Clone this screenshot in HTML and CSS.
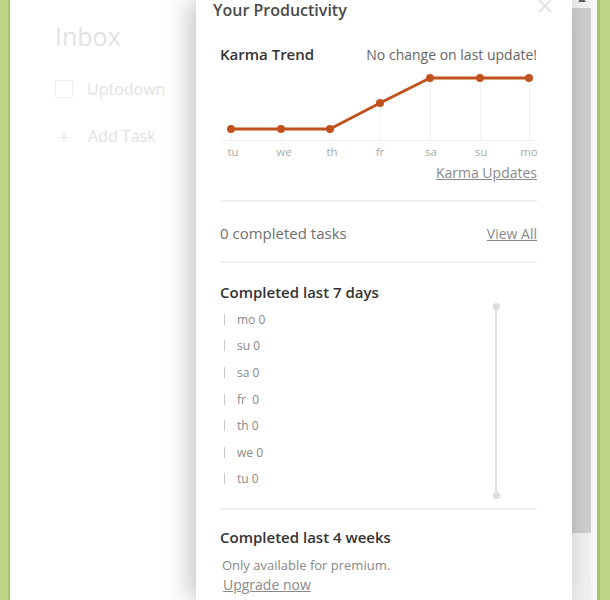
FILE: index.html
```html
<!DOCTYPE html>
<html lang="en">
<head>
    <meta charset="UTF-8">
    <meta name="viewport" content="width=device-width, initial-scale=1.0">
    <title>Your Productivity</title>
    <link rel="stylesheet" href="styles.css">
</head>
<body>
    <div class="app">
        <div class="edge edge-left"></div>

        <!-- Faded inbox behind the popup -->
        <div class="inbox">
            <h1 class="inbox-title">Inbox</h1>
            <div class="task">
                <span class="checkbox"></span>
                <span>Uptodown</span>
            </div>
            <div class="task add-task">
                <span class="plus">+</span>
                <span>Add Task</span>
            </div>
        </div>

        <!-- Productivity popup -->
        <div class="panel">
            <svg class="close" width="16" height="16" viewBox="0 0 16 16">
                <path d="M2 1 L14 13 M14 1 L2 13" stroke="#dcdcdc" stroke-width="1.6" fill="none"/>
            </svg>
            <h2 class="panel-title">Your Productivity</h2>

            <div class="row karma-head">
                <h3 class="section-title">Karma Trend</h3>
                <span class="note">No change on last update!</span>
            </div>

            <svg class="chart" width="317" height="92" viewBox="0 0 317 92">
                <g stroke="#f1f1f1" stroke-width="1">
                    <line x1="0" y1="70.5" x2="317" y2="70.5"/>
                    <line x1="11.5" y1="59" x2="11.5" y2="70"/>
                    <line x1="61.5" y1="59" x2="61.5" y2="70"/>
                    <line x1="110.5" y1="59" x2="110.5" y2="70"/>
                    <line x1="160.5" y1="33" x2="160.5" y2="70"/>
                    <line x1="210.5" y1="8" x2="210.5" y2="70"/>
                    <line x1="260.5" y1="8" x2="260.5" y2="70"/>
                    <line x1="309.5" y1="8" x2="309.5" y2="70"/>
                </g>
                <polyline points="11,59 61,59 110,59 160,33 210,8 260,8 309,8" fill="none" stroke="#c1511d" stroke-width="3" stroke-linejoin="round"/>
                <g fill="#c1511d">
                    <circle cx="11" cy="59" r="4"/>
                    <circle cx="61" cy="59" r="4"/>
                    <circle cx="110" cy="59" r="4"/>
                    <circle cx="160" cy="33" r="4"/>
                    <circle cx="210" cy="8" r="4"/>
                    <circle cx="260" cy="8" r="4"/>
                    <circle cx="309" cy="8" r="4"/>
                </g>
                <g class="axis" text-anchor="middle">
                    <text x="13" y="86">tu</text>
                    <text x="64" y="86">we</text>
                    <text x="112" y="86">th</text>
                    <text x="160" y="86">fr</text>
                    <text x="211" y="86">sa</text>
                    <text x="261" y="86">su</text>
                    <text x="309" y="86">mo</text>
                </g>
            </svg>

            <div class="row right">
                <a class="link" href="#">Karma Updates</a>
            </div>

            <div class="divider first"></div>

            <div class="row">
                <span class="count">0 completed tasks</span>
                <a class="link" href="#">View All</a>
            </div>

            <div class="divider"></div>

            <h3 class="section-title days-title">Completed last 7 days</h3>
            <div class="days">
                <ul class="day-list">
                    <li><span class="tick"></span>mo 0</li>
                    <li><span class="tick"></span>su 0</li>
                    <li><span class="tick"></span>sa 0</li>
                    <li><span class="tick"></span>fr&nbsp; 0</li>
                    <li><span class="tick"></span>th 0</li>
                    <li><span class="tick"></span>we 0</li>
                    <li><span class="tick"></span>tu 0</li>
                </ul>
                <div class="slider"></div>
            </div>

            <div class="divider"></div>

            <h3 class="section-title weeks-title">Completed last 4 weeks</h3>
            <p class="premium">Only available for premium.</p>
            <a class="link upgrade" href="#">Upgrade now</a>
        </div>

        <div class="scrollbar">
            <span class="arrow"></span>
            <div class="thumb"></div>
        </div>
        <div class="gutter"></div>
        <div class="edge edge-right"></div>
    </div>
</body>
</html>
```

FILE: styles.css
```css
body {
    margin: 0;
    padding: 0;
    background-color: #ffffff;
    font-family: "Open Sans", "Noto Sans", sans-serif;
    overflow: hidden;
}

.app {
    display: flex;
    height: 600px;
    width: 610px;
}

.edge {
    background-color: #bdd585;
}

.edge-left {
    width: 10px;
    border-right: 2px solid #a6c468;
    box-sizing: border-box;
}

.edge-right {
    width: 13px;
    border-left: 3px solid #a6c468;
    box-sizing: border-box;
}

/* Inbox in the background */
.inbox {
    width: 186px;
    padding-left: 45px;
    box-sizing: border-box;
    color: #e2e2e2;
}

.inbox-title {
    font-size: 25px;
    font-weight: 400;
    line-height: 32px;
    margin: 20px 0 0 0;
}

.task {
    display: flex;
    align-items: center;
    gap: 14px;
    font-size: 16px;
    height: 24px;
    margin-top: 25px;
}

.checkbox {
    width: 16px;
    height: 16px;
    border: 1px solid #eeeeee;
    border-radius: 2px;
}

.add-task {
    margin-top: 23px;
    gap: 15px;
}

.plus {
    font-size: 20px;
    width: 18px;
    text-align: center;
    color: #e8e8e8;
}

/* Popup */
.panel {
    position: relative;
    width: 376px;
    padding: 0 35px 0 24px;
    box-sizing: border-box;
    background-color: #ffffff;
    box-shadow: -6px 0 24px rgba(0, 0, 0, 0.24);
    z-index: 1;
}

.close {
    position: absolute;
    top: -1px;
    right: 19px;
}

.panel-title {
    font-size: 16px;
    font-weight: 600;
    color: #4a4a4a;
    line-height: 20px;
    margin: 0 0 0 -7px;
}

.row {
    display: flex;
    justify-content: space-between;
    align-items: center;
    height: 20px;
}

.row.right {
    justify-content: flex-end;
}

.karma-head {
    margin-top: 24px;
}

.section-title {
    font-size: 15px;
    font-weight: 600;
    color: #333333;
    line-height: 20px;
    margin: 0;
}

.note {
    font-size: 14px;
    color: #666666;
}

.chart {
    display: block;
    margin-top: 6px;
}

.axis text {
    font-size: 11.5px;
    fill: #aaaaaa;
}

.link {
    font-size: 14px;
    color: #8a8a8a;
    text-decoration: underline;
}

.divider {
    height: 2px;
    background-color: #f0f0f0;
    margin-top: 18px;
}

.divider.first {
    margin-top: 16px;
}

.row + .divider {
    margin-top: 18px;
}

.divider + .row {
    margin-top: 21px;
}

.count {
    font-size: 15px;
    color: #6f6f6f;
}

.days-title {
    margin-top: 19px;
}

.days {
    display: flex;
    justify-content: space-between;
    margin-top: 4px;
}

.day-list {
    list-style: none;
    margin: 0;
    padding: 0;
}

.day-list li {
    display: flex;
    align-items: center;
    height: 26.6px;
    font-size: 12px;
    color: #8a8a8a;
}

.tick {
    width: 1px;
    height: 11px;
    background-color: #c8c8c8;
    margin: 0 12px 0 4px;
}

.slider {
    position: relative;
    width: 2px;
    height: 190px;
    margin: 0 40px 0 0;
    background-color: #e2e2e2;
}

.slider::before,
.slider::after {
    content: "";
    position: absolute;
    left: -2.5px;
    width: 7px;
    height: 7px;
    border-radius: 50%;
    background-color: #dcdcdc;
}

.slider::before {
    top: -3px;
}

.slider::after {
    bottom: -3px;
}

.days + .divider {
    margin-top: 12px;
}

.weeks-title {
    margin-top: 17px;
}

.premium {
    font-size: 13px;
    color: #888888;
    line-height: 18px;
    margin: 9px 0 0 2px;
}

.upgrade {
    display: block;
    margin: 1px 0 0 3px;
    line-height: 20px;
}

/* Scrollbar */
.scrollbar {
    position: relative;
    width: 19px;
    background-color: #f0f0f0;
}

.arrow {
    position: absolute;
    top: -3px;
    left: 6px;
    width: 0;
    height: 0;
    border-left: 4px solid transparent;
    border-right: 4px solid transparent;
    border-bottom: 5px solid #606060;
}

.thumb {
    margin-top: 8px;
    height: 525px;
    background-color: #cdcdcd;
}

.gutter {
    width: 6px;
    background-color: #f8f8f8;
}
```
